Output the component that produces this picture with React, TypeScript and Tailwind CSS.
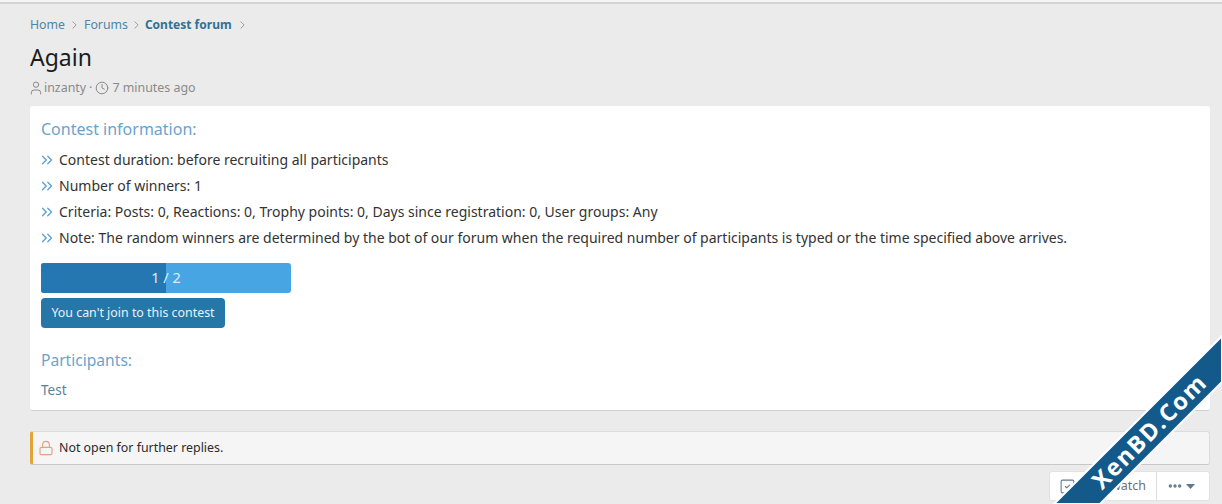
import React from "react";
import { ChevronRight, User, Clock, ChevronsRight, Lock, MoreHorizontal, SquareCheck } from "lucide-react";

function Info({ children }: { children: React.ReactNode }) {
  return (
    <li className="flex h-[26px] items-center">
      <ChevronsRight className="-ml-[3px] mr-[3px] mt-[2px] h-[18px] w-[18px] shrink-0 text-[#5a9fd0]" strokeWidth={1.7} />
      <span>{children}</span>
    </li>
  );
}

export default function App() {
  return (
    <div className="relative h-[504px] w-[1222px] overflow-hidden bg-[#ebebeb] text-[14px] text-[#333333] font-['Noto_Sans',sans-serif]">
      <div className="h-[4px] border-b-2 border-[#d4d4d4] bg-[#f4f4f4]" />
      <div className="pl-[30px] pr-[12px]">
        <nav className="mt-[12px] flex h-[18px] items-center text-[12.3px] text-[#4c86a8]">
          <span>Home</span>
          <ChevronRight className="mx-[3px] h-[14px] w-[13px] text-[#8a8a8a]" strokeWidth={1.5} />
          <span>Forums</span>
          <ChevronRight className="mx-[2px] h-[14px] w-[13px] text-[#8a8a8a]" strokeWidth={1.5} />
          <span className="text-[12px] font-bold text-[#2f7296]">Contest forum</span>
          <ChevronRight className="ml-[4px] h-[14px] w-[13px] text-[#8a8a8a]" strokeWidth={1.5} />
        </nav>
        <h1 className="mt-[5px] h-[36px] text-[23px] leading-[36px] text-[#1c1c1c]">Again</h1>
        <div className="mt-[4px] flex h-[18px] items-center text-[12.4px] text-[#8a8a8a]">
          <User className="-ml-[2px] mr-[0px] h-[16px] w-[16px]" strokeWidth={1.5} />
          <span>inzanty</span>
          <span className="mx-[3px]">·</span>
          <Clock className="mr-[3px] h-[14px] w-[14px]" strokeWidth={1.7} />
          <span>7 minutes ago</span>
        </div>
        <section className="mt-[9px] h-[305px] rounded-[3px] border-b border-[#cfcfcf] bg-white px-[11px] pt-[11px]">
          <h2 className="h-[24px] text-[16px] leading-[24px] text-[#6ba3cb]">Contest information:</h2>
          <ul className="mt-[5px]">
            <Info>Contest duration: before recruiting all participants</Info>
            <Info>Number of winners: 1</Info>
            <Info>Criteria: Posts: 0, Reactions: 0, Trophy points: 0, Days since registration: 0, User groups: Any</Info>
            <Info>Note: The random winners are determined by the bot of our forum when the required number of participants is typed or the time specified above arrives.</Info>
          </ul>
          <div className="relative mt-[13px] flex h-[30px] w-[250px] overflow-hidden rounded-[3px] bg-[#47a5e3]">
            <div className="h-full w-1/2 bg-[#2577b1]" />
            <span className="absolute inset-0 flex items-center justify-center text-[14.5px] text-[#dbeef9]">1 / 2</span>
          </div>
          <button className="mt-[5px] flex h-[30px] w-[184px] items-center justify-center rounded-[4px] bg-[#2577a8] text-[12.4px] text-[#e6f3fa]">
            You can't join to this contest
          </button>
          <h2 className="mt-[20px] h-[24px] text-[15.6px] leading-[24px] text-[#6ba3cb]">Participants:</h2>
          <div className="mt-[8px] text-[13.5px] text-[#5b8199]">Test</div>
        </section>
        <div className="mt-[20px] flex h-[34px] items-center rounded-[3px] border border-[#dcdcdc] border-b-[#c8c8c8] border-l-[3px] border-l-[#e2a33a] bg-[#f5f5f5] pl-[5px] text-[12.4px] text-[#2b2b2b]">
          <Lock className="mr-[5px] h-[16px] w-[16px] text-[#e8a080]" strokeWidth={1.7} />
          <span>Not open for further replies.</span>
        </div>
        <div className="mt-[6px] flex justify-end">
          <div className="flex h-[30px] w-[161px] rounded-[3px] border border-[#e2e2e2] bg-white text-[12.5px] text-[#6f6f6f]">
            <div className="flex flex-1 items-center justify-between pl-[9px] pr-[10px]">
              <SquareCheck className="h-[17px] w-[17px] text-[#5d7890]" strokeWidth={1.5} />
              <span>Unwatch</span>
            </div>
            <div className="flex w-[53px] items-center justify-center gap-[3px] border-l border-[#dddddd] pr-[4px]">
              <MoreHorizontal className="h-[16px] w-[16px] text-[#5d7890]" strokeWidth={3} />
              <svg width="9" height="5" viewBox="0 0 9 5"><path d="M0 0h9L4.5 5z" fill="#5d7890" /></svg>
            </div>
          </div>
        </div>
      </div>
      <svg className="absolute bottom-0 right-0" width="180" height="180" viewBox="0 0 180 180">
        <polygon points="12,180 180,12 180,58 58,180" fill="#135a8a" stroke="#ffffff" strokeWidth="2" />
      </svg>
      <div className="absolute left-[1069px] top-[414px] w-[160px] -rotate-45 text-center text-[23.5px] leading-[34px] font-bold tracking-[1.5px] text-white" style={{ fontFamily: '"Open Sans", sans-serif' }}>
        XenBD.Com
      </div>
    </div>
  );
}
